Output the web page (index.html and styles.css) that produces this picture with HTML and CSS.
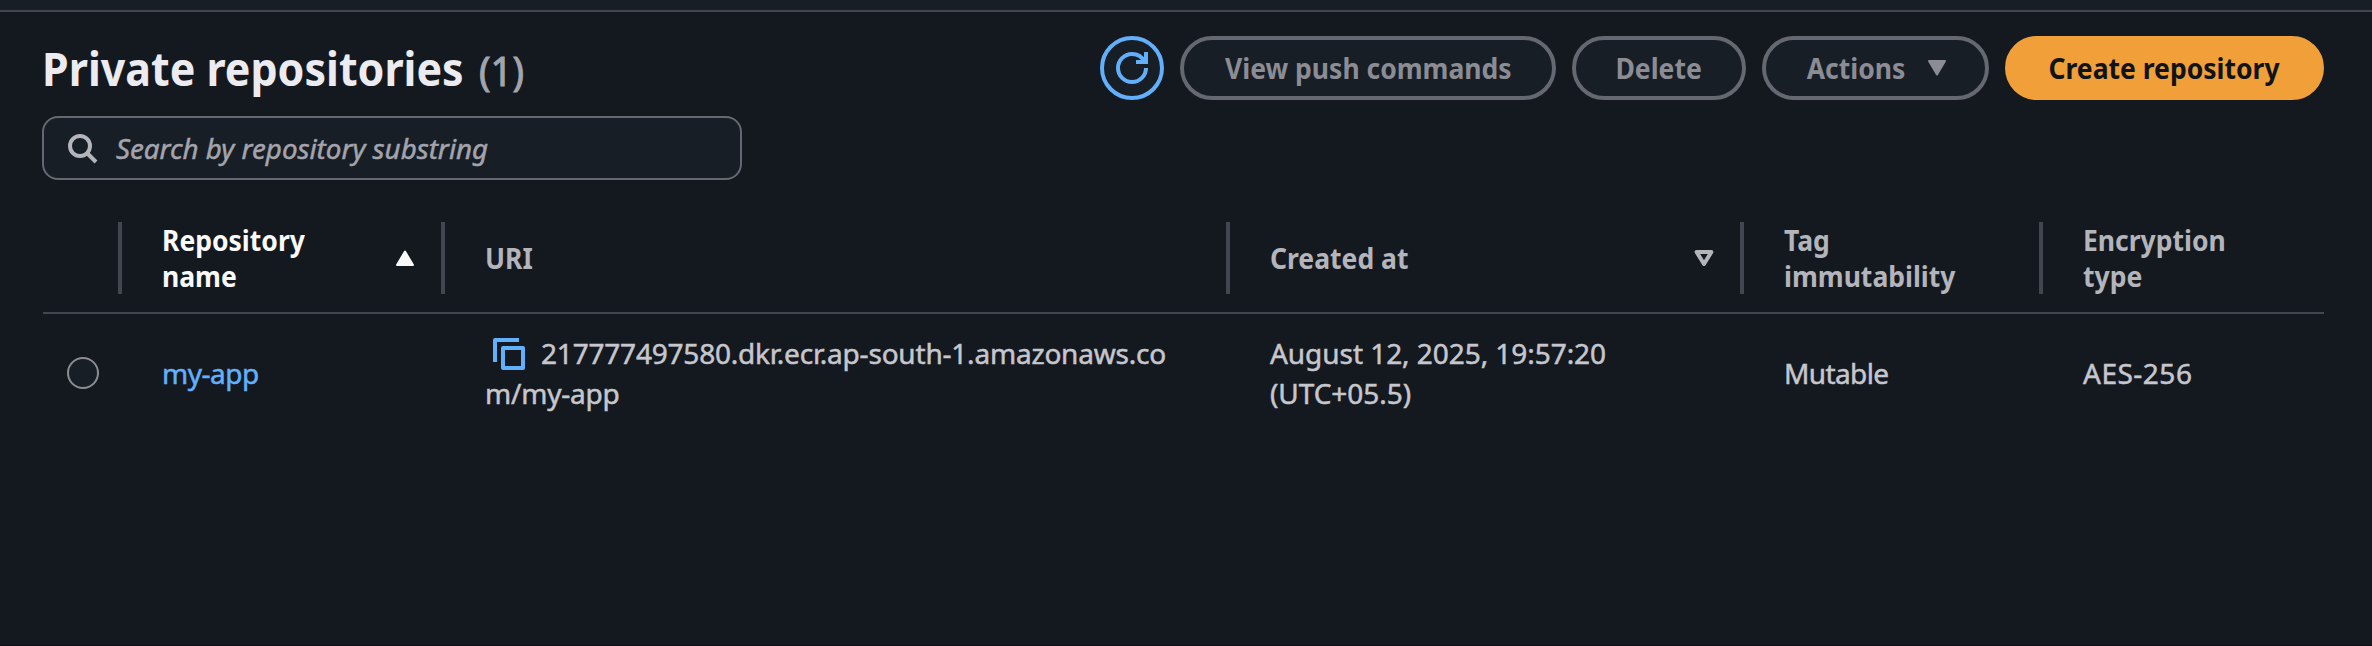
FILE: index.html
```
<!DOCTYPE html>
<html lang="en">
<head>
<meta charset="utf-8">
<title>Private repositories</title>
<link rel="stylesheet" href="styles.css">
</head>
<body>
<div class="page">
  <div class="topstrip"></div>
  <main class="panel">
    <header class="header">
      <h1 class="title"><span class="title-text">Private repositories</span><span class="count">(1)</span></h1>
      <div class="actions">
        <button class="btn btn-refresh" aria-label="Refresh">
          <svg width="32" height="32" viewBox="0 0 16 16" fill="none" stroke="currentColor" stroke-width="2"><path d="M15 8c0 3.87-3.13 7-7 7s-7-3.13-7-7 3.13-7 7-7c2.79 0 5.2 1.63 6.33 4"/><path d="M10 5h5V0"/></svg>
        </button>
        <button class="btn btn-view"><span class="bold">View push commands</span></button>
        <button class="btn btn-delete"><span class="bold">Delete</span></button>
        <button class="btn btn-menu"><span class="bold">Actions</span>
          <svg class="caret" width="20" height="16" viewBox="0 0 20 16"><path d="M2 1H18L10 14.5Z" fill="currentColor" stroke="currentColor" stroke-width="2" stroke-linejoin="round"/></svg>
        </button>
        <button class="btn btn-primary"><span class="bold">Create repository</span></button>
      </div>
    </header>
    <div class="search">
      <svg class="search-icon" width="30" height="30" viewBox="0 0 30 30" fill="none" stroke="currentColor" stroke-width="4"><circle cx="12" cy="12" r="10"/><path d="M19 19L28 28"/></svg>
      <span class="placeholder">Search by repository substring</span>
    </div>
    <section class="table">
      <div class="row head">
        <div class="cell"></div>
        <div class="cell sorted"><span class="bold">Repository<br>name</span>
          <svg class="sort" width="20" height="16" viewBox="0 0 20 16"><path d="M2 15H18L10 1.5Z" fill="currentColor" stroke="currentColor" stroke-width="2" stroke-linejoin="round"/></svg>
        </div>
        <div class="cell"><span class="bold">URI</span></div>
        <div class="cell"><span class="bold">Created at</span>
          <svg class="sort" width="20" height="16" viewBox="0 0 20 16"><path d="M2.6 2H17.4L10 14Z" fill="none" stroke="currentColor" stroke-width="4" stroke-linejoin="round"/></svg>
        </div>
        <div class="cell"><span class="bold">Tag<br>immutability</span></div>
        <div class="cell"><span class="bold">Encryption<br>type</span></div>
      </div>
      <div class="row body">
        <div class="cell select"><span class="radio"></span></div>
        <div class="cell"><a class="link">my-app</a></div>
        <div class="cell"><div class="uri"><svg class="copy" width="32" height="32" viewBox="0 0 32 32" fill="none" stroke="currentColor" stroke-width="4" stroke-linejoin="round"><path d="M2 24V2H26"/><path d="M10 10H30V30H10Z"/></svg>217777497580.dkr.ecr.ap-south-1.amazonaws.co<br>m/my-app</div></div>
        <div class="cell"><div class="date">August 12, 2025, 19:57:20<br>(UTC+05.5)</div></div>
        <div class="cell"><span class="mutable">Mutable</span></div>
        <div class="cell"><span class="enc">AES-256</span></div>
      </div>
    </section>
  </main>
  <div class="bottomline"></div>
</div>
</body>
</html>
```
FILE: styles.css
```
* { box-sizing: border-box; }
body {
  margin: 0;
  background: #141920;
  color: #c6c6cd;
  font: 28px/40px "Noto Sans", "Open Sans", sans-serif;
  -webkit-text-stroke: .5px currentColor;
}
.page { height: 646px; display: flex; flex-direction: column; overflow: hidden; }
.topstrip { height: 12px; flex: none; background: #171e25; border-bottom: 2px solid #424650; }
.panel { flex: 1; padding: 24px 48px 0 42px; }
.bottomline { height: 1px; background: #0c0d12; }

.header { display: flex; justify-content: space-between; align-items: flex-start; height: 64px; }
.title { margin: 2px 0 0 0; display: flex; align-items: baseline; line-height: 60px; }
.title-text { width: 437px; font-size: 46px; font-weight: 700; color: #ebebf0; white-space: nowrap; transform: scaleX(.934); transform-origin: left; -webkit-text-stroke: 0; }
.count { font-size: 40px; font-weight: 400; color: #a4a4ad; transform: scaleX(.96); transform-origin: left; -webkit-text-stroke: 1px #a4a4ad; }

.actions { display: flex; gap: 16px; }
.btn {
  height: 64px;
  padding: 0;
  display: flex;
  align-items: center;
  justify-content: center;
  border: 4px solid #656871;
  border-radius: 32px;
  background: #171e25;
  color: #8c8c94;
  font: inherit;
  white-space: nowrap;
}
.bold { font-weight: 700; transform: scaleX(.947); -webkit-text-stroke: 0; }
.btn-refresh { width: 64px; border-color: #62b0fb; color: #62b0fb; }
.btn-view { width: 376px; }
.btn-delete { width: 174px; }
.btn-menu { width: 227px; gap: 19px; }
.btn-primary { width: 319px; border-color: #f19f38; background: #f19f38; color: #0f141a; }

.search {
  width: 700px;
  height: 64px;
  margin-top: 16px;
  padding-left: 24px;
  display: flex;
  align-items: center;
  gap: 18px;
  border: 2px solid #656871;
  border-radius: 16px;
  background: #171e25;
  color: #b4b4bb;
}
.search-icon { margin-top: 2px; }
.placeholder { font-style: italic; color: #a4a4ad; -webkit-text-stroke-color: #a4a4ad; white-space: nowrap; transform: scaleX(.99); transform-origin: left; }

.table { margin: 42px 0 0 1px; }
.row { display: grid; grid-template-columns: 79px 323px 785px 514px 299px 281px; }
.cell { display: flex; align-items: center; padding-left: 40px; }
.head { height: 92px; padding-bottom: 18px; border-bottom: 2px solid #424650; line-height: 36px; color: #b4b4bb; }
.head .cell { justify-content: space-between; padding-right: 26px; border-right: 4px solid #424650; }
.head .cell:last-child { border-right: 0; }
.head .bold { transform-origin: left; }
.head .sorted { color: #fafafa; }
.body { padding-top: 19px; }
.select { padding-left: 24px; }
.radio { width: 32px; height: 32px; border: 2px solid #8c8c94; border-radius: 50%; background: #171e25; }
.link { color: #62b0fb; -webkit-text-stroke-color: #62b0fb; letter-spacing: -.5px; }
.uri { white-space: nowrap; letter-spacing: -.2px; }
.copy { margin: 0 16px 0 8px; height: 32px; vertical-align: -6px; color: #62b0fb; }
.date { letter-spacing: -.05px; }
.mutable { letter-spacing: -.6px; }
.enc { letter-spacing: .5px; }
```
